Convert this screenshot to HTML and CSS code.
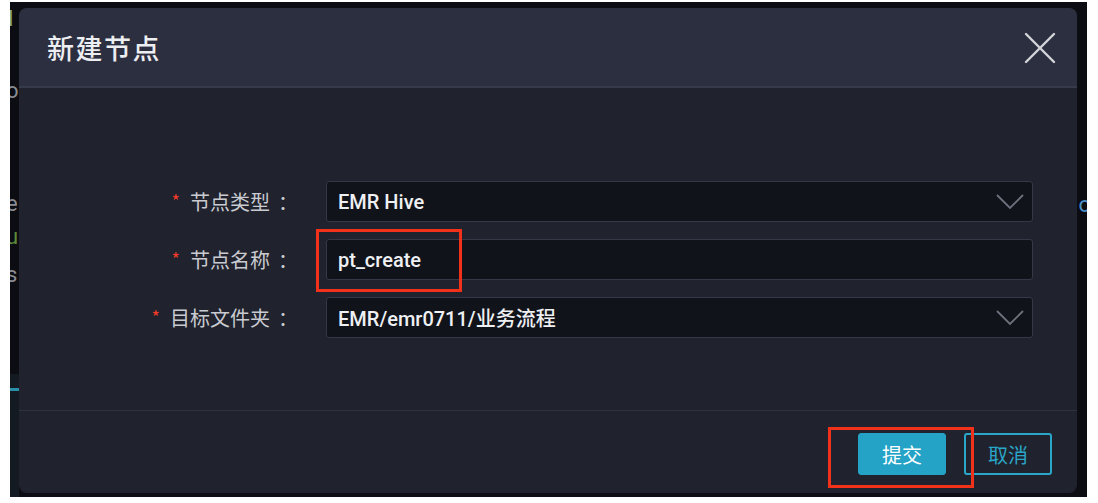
FILE: index.html
```html
<!DOCTYPE html>
<html lang="zh-CN">
<head>
<meta charset="utf-8">
<title>新建节点</title>
<link rel="stylesheet" href="styles.css">
</head>
<body>
<div class="screen">
  <div class="backdrop">
    <span class="frag frag-l">l</span>
    <span class="frag frag-o">o</span>
    <span class="frag frag-e">e</span>
    <span class="frag frag-u">u</span>
    <span class="frag frag-s">s</span>
    <span class="frag frag-r">o</span>
    <span class="frag-block"></span>
    <span class="frag-line"></span>
  </div>
  <div class="dialog">
    <div class="header">
      <div class="title">新建节点</div>
      <svg class="close" width="32" height="32" viewBox="0 0 32 32">
        <path d="M2 2 L30 30 M30 2 L2 30" stroke="#d3d5db" stroke-width="2.4" fill="none" stroke-linecap="round"/>
      </svg>
    </div>
    <div class="body">
      <div class="form">
        <div class="row">
          <label class="label"><span class="req">*</span>节点类型<span class="colon">：</span></label>
          <div class="field select">
            <span class="value">EMR Hive</span>
            <svg class="chev" width="28" height="16" viewBox="0 0 28 16"><path d="M1 1 L14 14 L27 1" stroke="#6e707d" stroke-width="1.8" fill="none"/></svg>
          </div>
        </div>
        <div class="row">
          <label class="label"><span class="req">*</span>节点名称<span class="colon">：</span></label>
          <div class="field">
            <span class="value">pt_create</span>
          </div>
        </div>
        <div class="row">
          <label class="label"><span class="req">*</span>目标文件夹<span class="colon">：</span></label>
          <div class="field select">
            <span class="value">EMR/emr0711/业务流程</span>
            <svg class="chev" width="28" height="16" viewBox="0 0 28 16"><path d="M1 1 L14 14 L27 1" stroke="#6e707d" stroke-width="1.8" fill="none"/></svg>
          </div>
        </div>
      </div>
    </div>
    <div class="footer">
      <button class="btn primary">提交</button>
      <button class="btn ghost">取消</button>
    </div>
    <div class="mark mark-name"></div>
    <div class="mark mark-submit"></div>
  </div>
</div>
</body>
</html>
```

FILE: styles.css
```css
html, body {
  margin: 0;
  padding: 0;
  background: #ffffff;
}
body {
  font-family: Roboto, "Noto Sans CJK SC", "Liberation Sans", sans-serif;
}
.screen {
  position: relative;
  width: 1077px;
  height: 495px;
  margin: 2px 0 0 10px;
  background: #0c0d12;
  overflow: hidden;
  padding: 6px 0 0 9px;
  box-sizing: border-box;
}
.backdrop {
  position: absolute;
  inset: 0;
}
.frag {
  position: absolute;
  font-size: 22px;
  line-height: 1;
  color: #8a8c94;
}
.frag-l { left: -2px; top: 6px; color: #8fb07a; }
.frag-o { left: -4px; top: 78px; }
.frag-e { left: -4px; top: 191px; }
.frag-u { left: -4px; top: 224px; color: #5b8b3a; }
.frag-s { left: -4px; top: 262px; }
.frag-r { right: -4px; top: 192px; color: #4a8fc8; }
.frag-block {
  position: absolute;
  left: 0;
  top: 372px;
  width: 9px;
  height: 123px;
  background: #141a22;
}
.frag-line {
  position: absolute;
  left: 0;
  top: 386px;
  width: 9px;
  height: 3px;
  background: #2a8fa8;
}
.dialog {
  position: relative;
  z-index: 1;
  width: 1058px;
  height: 485px;
  border-radius: 8px;
  background: #20222d;
  display: flex;
  flex-direction: column;
  overflow: hidden;
}
.header {
  height: 78px;
  flex: none;
  background: #2c2f3f;
  border-bottom: 2px solid #373a4b;
  display: flex;
  align-items: center;
  justify-content: space-between;
  padding: 0 21px 0 28px;
}
.title {
  font-size: 27px;
  font-weight: 500;
  color: #eceef2;
  font-family: "Noto Sans CJK SC", sans-serif;
  letter-spacing: 1.5px;
  margin-top: 1px;
}
.close {
  display: block;
  margin-top: 1px;
}
.body {
  flex: 1;
  padding-top: 93px;
  box-sizing: border-box;
}
.form {
  display: flex;
  flex-direction: column;
  gap: 17px;
}
.row {
  display: grid;
  grid-template-columns: 307px 707px;
  align-items: center;
  height: 41px;
}
.label {
  text-align: right;
  padding-right: 28px;
  font-size: 20px;
  color: #c9cbd1;
  font-family: "Noto Sans CJK SC", sans-serif;
  white-space: nowrap;
}
.colon {
  margin-left: 8px;
}
.req {
  color: #f23c2a;
  font-size: 18px;
  margin-right: 10px;
  position: relative;
  top: -2px;
}
.field {
  height: 41px;
  box-sizing: border-box;
  background: #11131a;
  border: 1px solid #363847;
  border-radius: 3px;
  display: flex;
  align-items: center;
  justify-content: space-between;
  padding: 0 8px 0 11px;
}
.value {
  font-size: 20px;
  font-weight: 500;
  color: #eef0f3;
}
.chev {
  display: block;
}
.footer {
  flex: none;
  height: 83px;
  border-top: 1px solid #2f3240;
  display: flex;
  justify-content: flex-end;
  align-items: flex-start;
  gap: 18px;
  padding: 22px 25px 0 0;
  box-sizing: border-box;
}
.btn {
  width: 88px;
  height: 42px;
  border-radius: 3px;
  font-size: 20px;
  font-family: "Noto Sans CJK SC", sans-serif;
  cursor: pointer;
  box-sizing: border-box;
}
.btn.primary {
  background: #24a3c7;
  border: 1px solid #24a3c7;
  color: #ffffff;
}
.btn.ghost {
  background: transparent;
  border: 2px solid #2aa6c8;
  color: #2aa6c8;
}
.mark {
  position: absolute;
  border: 3px solid #f2311b;
  box-sizing: border-box;
  pointer-events: none;
}
.mark-name {
  left: 297px;
  top: 221px;
  width: 146px;
  height: 63px;
}
.mark-submit {
  left: 809px;
  top: 419px;
  width: 146px;
  height: 61px;
}
```
